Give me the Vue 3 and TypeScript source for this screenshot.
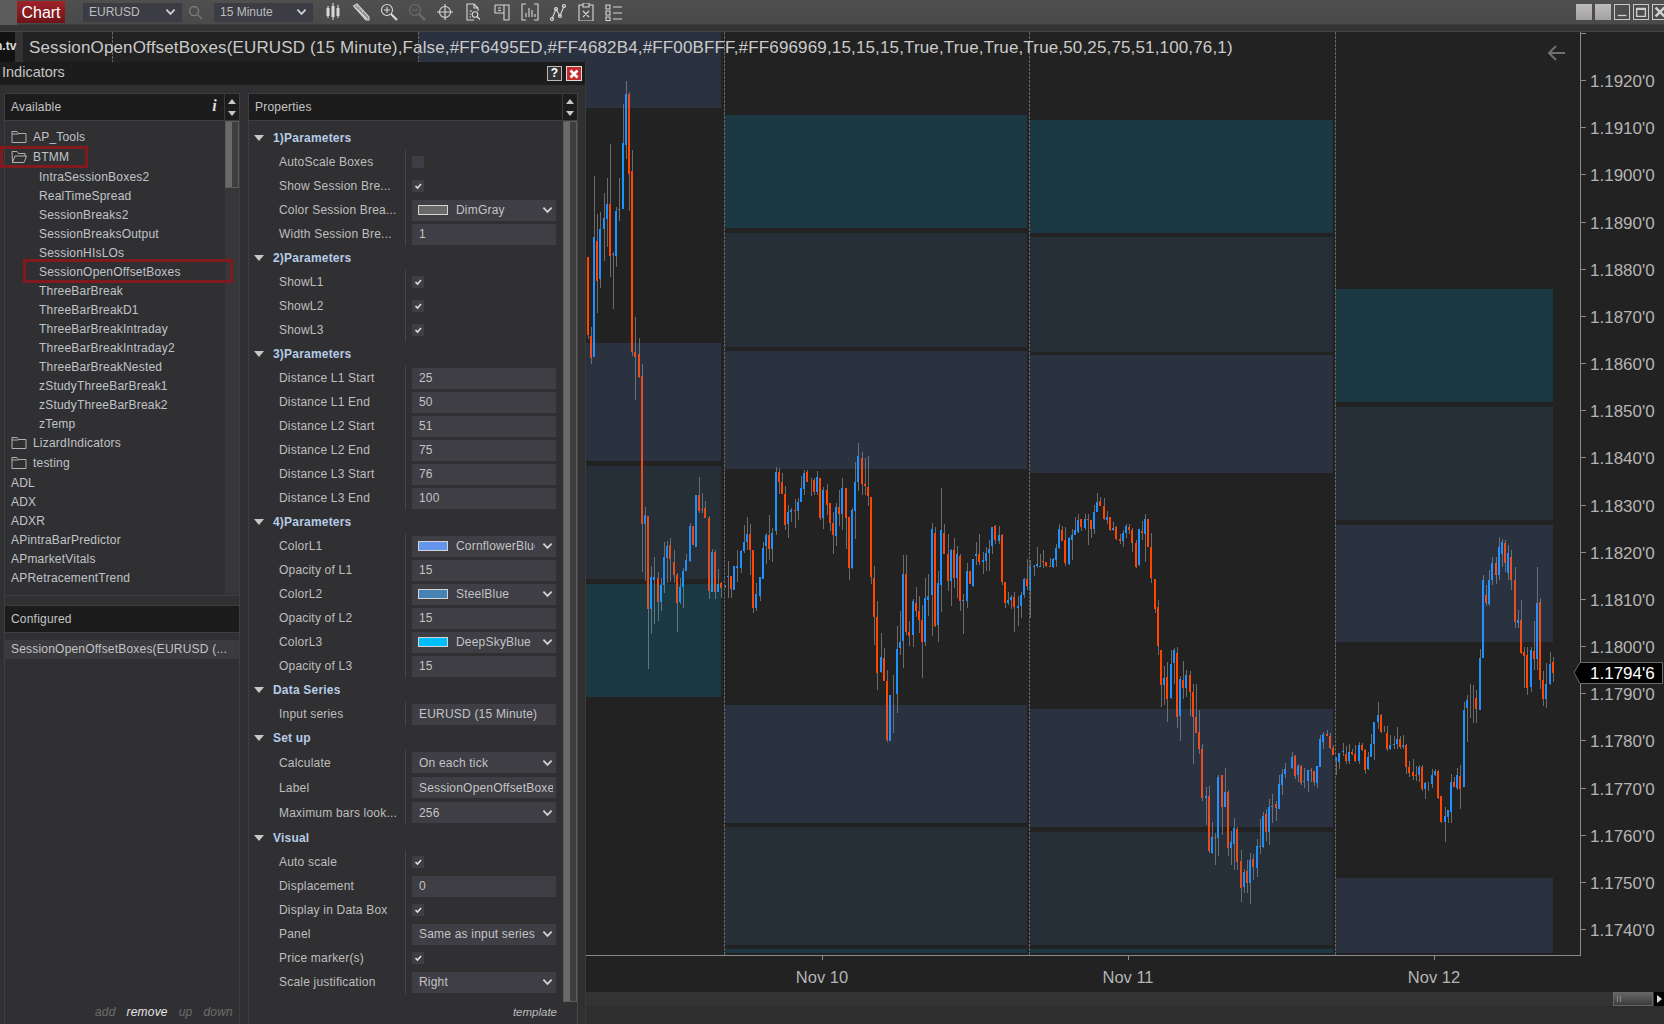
<template>
  <div class="screen">
    <div class="toolbar">
      <div class="corner"></div>
      <div class="tab-chart">Chart</div>
      <div class="drop drop-first">
        <span>EURUSD</span>
        <svg class="chev" viewBox="0 0 12 8"><path d="M1.5 1.5 6 6l4.500-4.500" /></svg>
      </div>
      <svg class="tool-search" viewBox="0 0 16 16">
        <circle cx="6.500" cy="6.500" r="4.800" />
        <path d="m10 10 5 5" />
      </svg>
      <div class="drop drop-second">
        <span>15 Minute</span>
        <svg class="chev" viewBox="0 0 12 8"><path d="M1.5 1.5 6 6l4.500-4.500" /></svg>
      </div>
      <div class="tools">
        <svg viewBox="0 0 18 18" class="tool"><path d="M4 3v12M9 0v17M14 2v13" /><rect x="2.500" y="5" width="3" height="8" class="fill" /><rect x="7.500" y="3" width="3" height="11" class="fill" /><rect x="12.500" y="5" width="3" height="8" class="fill" /></svg>
        <svg viewBox="0 0 18 18" class="tool"><path d="M1.500 3 5 1l12 13v3h-3z" class="fill-soft" /><path d="M3 4.500 15 16M5 3l1 1M7.500 5.500l1 1M10 8l1 1" /></svg>
        <svg viewBox="0 0 18 18" class="tool"><circle cx="7" cy="7" r="5.500" /><path d="M4 7h6M7 4v6" /><path d="m11 11 6 6" class="thick" /></svg>
        <svg viewBox="0 0 18 18" class="tool dim"><circle cx="7" cy="7" r="5.500" /><path d="M4 7h6" /><path d="m11 11 6 6" class="thick" /></svg>
        <svg viewBox="0 0 18 18" class="tool"><circle cx="9" cy="9" r="5.500" /><path d="M9 1v16M1 9h16" /></svg>
        <svg viewBox="0 0 18 18" class="tool"><path d="M10 17H3V1h7l4 4v3M10 1v4h4" /><circle cx="11" cy="11.500" r="2.800" /><path d="m13 13.500 3 3M5.500 8H8M5.500 11H7M5.500 14H7" /></svg>
        <svg viewBox="0 0 18 18" class="tool"><path d="M2 2h14v15M11 2v15h5M2 2v8h9M5 5h3M5 7.500h3" /></svg>
        <svg viewBox="0 0 18 18" class="tool"><path d="M5 1H1v16h4M13 1h4v16h-4M5 14v-4M8 14V5M11 14V7M14 14v-3" /></svg>
        <svg viewBox="0 0 18 18" class="tool"><path d="M3 16 7 6l4 7 4-10" /><circle cx="3" cy="16" r="1.500" /><circle cx="7" cy="6" r="1.500" /><circle cx="11" cy="13" r="1.500" /><circle cx="15" cy="3" r="1.500" /></svg>
        <svg viewBox="0 0 18 18" class="tool"><path d="M6 2H2v16h14V2h-4M6 0h6v4H6zM6 8l6 6M12 8l-6 6" /></svg>
        <svg viewBox="0 0 18 18" class="tool"><path d="M1 2h4v4H1zM1 8h4v4H1zM1 14h4v3.500H1zM8 4h9M8 10h9M8 16h9" /></svg>
      </div>
      <div class="win-buttons">
        <span class="win-solid"></span>
        <span class="win-solid"></span>
        <span class="win-line"><svg viewBox="0 0 16 16"><path d="M3 12h10" /></svg></span>
        <span class="win-line"><svg viewBox="0 0 16 16"><path d="M3 4h10v9H3zM3 5h10" /></svg></span>
        <span class="win-line"><svg viewBox="0 0 16 16"><path d="m3 3 10 10M13 3 3 13" class="thick" /></svg></span>
      </div>
    </div>

    <div class="chart-window">
      <svg class="chart" viewBox="0 32 1664 960" width="1664" height="960">
        <g shape-rendering="crispEdges">
          <rect v-for="(c, i) in wicks" :key="'w' + i" :x="c.x" :y="c.y" width="1" :height="c.h" fill="#6b6b6b" />
          <rect v-for="(c, i) in bodies" :key="'b' + i" :x="c.x" :y="c.y" width="2" :height="c.h" :fill="c.color" />
          <rect
            v-for="(b, i) in boxes"
            :key="'x' + i"
            :x="b.x"
            :y="b.y"
            :width="b.w"
            :height="b.h"
            :fill="b.color"
            fill-opacity="0.15"
          />
          <line v-for="x in breaks" :key="x" :x1="x + 0.5" :x2="x + 0.5" y1="32" y2="955" stroke="#666" stroke-dasharray="3 1" />
          <path d="M1580.500 32V955.500H586" fill="none" stroke="#8a8a8a" />
          <path d="M1580 33.500h6" stroke="#8a8a8a" />
          <line v-for="p in prices" :key="p.label" x1="1580" x2="1586" :y1="p.y + 0.5" :y2="p.y + 0.5" stroke="#8a8a8a" />
          <line v-for="d in days" :key="d.label" :x1="d.x + 0.5" :x2="d.x + 0.5" y1="955" y2="960" stroke="#8a8a8a" />
        </g>
        <text v-for="p in prices" :key="p.label" class="price" x="1590" :y="p.y + 7">{{ p.label }}</text>
        <text v-for="d in days" :key="d.label" class="day" :x="d.x" y="983" text-anchor="middle">{{ d.label }}</text>
        <path d="M1574 672.500 1580 662.500H1662.500V683.500H1580Z" fill="#000" stroke="#6a6a6a" />
        <text class="price last" x="1590" y="679">1.1794'6</text>
        <path d="M1565 53h-16M1556 46l-7 7 7 7" fill="none" stroke="#707070" stroke-width="2" />
      </svg>

      <div class="tab-stub">n.tv</div>
      <div class="chart-title">SessionOpenOffsetBoxes(EURUSD (15 Minute),False,#FF6495ED,#FF4682B4,#FF00BFFF,#FF696969,15,15,15,True,True,True,True,50,25,75,51,100,76,1)</div>
    </div>

    <div class="hscroll">
      <div class="hthumb"><i></i><i></i></div>
      <div class="harrow"><svg viewBox="0 0 5 8"><path d="M0 0 5 4 0 8z" /></svg></div>
    </div>
    <div class="footer"></div>

    <div class="dialog">
      <div class="dialog-head">
        <span>Indicators</span>
        <span class="btn-help">?</span>
        <span class="btn-close"><svg viewBox="0 0 16 16"><path d="m4 4 8 8M12 4l-8 8" /></svg></span>
      </div>
      <div class="dialog-body">
        <div class="col-left">
          <div class="head">
            <span>Available</span>
            <span class="info">i</span>
            <div class="spin">
              <svg viewBox="0 0 8 5"><path d="M4 0 8 5H0z" /></svg>
              <svg viewBox="0 0 8 5"><path d="M0 0h8L4 5z" /></svg>
            </div>
          </div>
          <div class="avail">
            <div class="tree">
              <div v-for="item in tree" :key="item.name" class="tree-row" :class="item.kind">
                <svg v-if="item.kind === 'folder'" class="folder-icon" viewBox="0 0 16 14"><path d="M1 12.500V1.500h5l1.500 2h7.500v9zM1 4h6.500" /></svg>
                <svg v-if="item.kind === 'open'" class="folder-icon" viewBox="0 0 16 14"><path d="M1.500 12.500 1 1.500h5l1.500 2H14V6M1.500 12.500 4 6h11.500L13 12.500z" /></svg>
                <span>{{ item.name }}</span>
                <i v-if="item.mark" class="mark" :class="item.mark"></i>
              </div>
            </div>
            <div class="track"><div class="thumb short"></div></div>
          </div>
          <div class="head configured">Configured</div>
          <div class="conf-list">
            <div class="conf-item">SessionOpenOffsetBoxes(EURUSD (...</div>
            <div class="conf-actions">
              <span>add</span>
              <span class="on">remove</span>
              <span>up</span>
              <span>down</span>
            </div>
          </div>
        </div>

        <div class="col-right">
          <div class="head">
            <span>Properties</span>
            <div class="spin">
              <svg viewBox="0 0 8 5"><path d="M4 0 8 5H0z" /></svg>
              <svg viewBox="0 0 8 5"><path d="M0 0h8L4 5z" /></svg>
            </div>
          </div>
          <div class="props">
            <div class="prop-list">
              <div v-for="g in groups" :key="g.title" class="group" :class="g.cls">
                <div class="group-title">
                  <svg viewBox="0 0 10 6"><path d="M0 0h10L5 6z" /></svg>
                  <span>{{ g.title }}</span>
                </div>
                <div class="group-rows">
                  <div v-for="r in g.rows" :key="r.label" class="prop">
                    <span class="prop-label">{{ r.label }}</span>
                    <span v-if="r.kind === 'check'" class="check">
                      <svg v-if="r.on" viewBox="0 0 12 12"><path d="m3.500 6 2 2 3.500-4" /></svg>
                    </span>
                    <div v-else class="field">
                      <span v-if="r.color" class="swatch" :style="{ background: r.color }"></span>
                      <span class="field-text">{{ r.value }}</span>
                      <svg v-if="r.kind === 'select'" class="chev" viewBox="0 0 12 8"><path d="M1.500 1.500 6 6l4.500-4.500" /></svg>
                    </div>
                  </div>
                </div>
              </div>
            </div>
            <div class="track right"><div class="thumb long"></div></div>
          </div>
          <div class="template">template</div>
        </div>
      </div>
    </div>
  </div>
</template>

<script setup lang="ts">
type Row = { label: string; kind: "check" | "text" | "select"; value?: string; on?: boolean; color?: string };
type Candle = [number, number, number, number, number, number];

const tree = [
  { name: "AP_Tools", kind: "folder" },
  { name: "BTMM", kind: "open", mark: "mark-folder" },
  { name: "IntraSessionBoxes2", kind: "sub" },
  { name: "RealTimeSpread", kind: "sub" },
  { name: "SessionBreaks2", kind: "sub" },
  { name: "SessionBreaksOutput", kind: "sub" },
  { name: "SessionHIsLOs", kind: "sub" },
  { name: "SessionOpenOffsetBoxes", kind: "sub", mark: "mark-item" },
  { name: "ThreeBarBreak", kind: "sub" },
  { name: "ThreeBarBreakD1", kind: "sub" },
  { name: "ThreeBarBreakIntraday", kind: "sub" },
  { name: "ThreeBarBreakIntraday2", kind: "sub" },
  { name: "ThreeBarBreakNested", kind: "sub" },
  { name: "zStudyThreeBarBreak1", kind: "sub" },
  { name: "zStudyThreeBarBreak2", kind: "sub" },
  { name: "zTemp", kind: "sub" },
  { name: "LizardIndicators", kind: "folder" },
  { name: "testing", kind: "folder" },
  { name: "ADL", kind: "root" },
  { name: "ADX", kind: "root" },
  { name: "ADXR", kind: "root" },
  { name: "APintraBarPredictor", kind: "root" },
  { name: "APmarketVitals", kind: "root" },
  { name: "APRetracementTrend", kind: "root" },
];

const check = (label: string, on = true): Row => ({ label, kind: "check", on });
const text = (label: string, value: string): Row => ({ label, kind: "text", value });
const select = (label: string, value: string, color?: string): Row => ({ label, kind: "select", value, color });

const groups: { title: string; cls?: string; rows: Row[] }[] = [
  {
    title: "1)Parameters",
    rows: [
      check("AutoScale Boxes", false),
      check("Show Session Bre..."),
      select("Color Session Brea...", "DimGray", "#696969"),
      text("Width Session Bre...", "1"),
    ],
  },
  { title: "2)Parameters", rows: [check("ShowL1"), check("ShowL2"), check("ShowL3")] },
  {
    title: "3)Parameters",
    rows: [
      text("Distance L1 Start", "25"),
      text("Distance L1 End", "50"),
      text("Distance L2 Start", "51"),
      text("Distance L2 End", "75"),
      text("Distance L3 Start", "76"),
      text("Distance L3 End", "100"),
    ],
  },
  {
    title: "4)Parameters",
    rows: [
      select("ColorL1", "CornflowerBlue", "#6495ed"),
      text("Opacity of L1", "15"),
      select("ColorL2", "SteelBlue", "#4682b4"),
      text("Opacity of L2", "15"),
      select("ColorL3", "DeepSkyBlue", "#00bfff"),
      text("Opacity of L3", "15"),
    ],
  },
  { title: "Data Series", rows: [text("Input series", "EURUSD (15 Minute)")] },
  {
    title: "Set up",
    cls: "loose",
    rows: [
      select("Calculate", "On each tick"),
      text("Label", "SessionOpenOffsetBoxes"),
      select("Maximum bars look...", "256"),
    ],
  },
  {
    title: "Visual",
    cls: "tall",
    rows: [
      check("Auto scale"),
      text("Displacement", "0"),
      check("Display in Data Box"),
      select("Panel", "Same as input series"),
      check("Price marker(s)"),
      select("Scale justification", "Right"),
    ],
  },
];

// chart geometry, read off the picture in page pixels
const L1 = "#6495ed";
const L2 = "#4682b4";
const L3 = "#00bfff";
const box = (x: number, r: number, y: number, b: number, color: string) => ({ x, y, w: r - x, h: b - y, color });
const boxes = [
  box(419, 721, 32, 108, L1),
  box(419, 721, 343, 461, L1),
  box(419, 721, 466, 579, L2),
  box(419, 721, 584, 697, L3),
  box(725, 1027, 115, 228, L3),
  box(725, 1027, 233, 347, L2),
  box(725, 1027, 351, 469, L1),
  box(725, 1027, 705, 823, L1),
  box(725, 1027, 827, 945, L2),
  box(725, 1027, 949, 953, L3),
  box(1030, 1333, 120, 233, L3),
  box(1030, 1333, 237, 352, L2),
  box(1030, 1333, 355, 473, L1),
  box(1030, 1333, 709, 827, L1),
  box(1030, 1333, 832, 945, L2),
  box(1030, 1333, 949, 953, L3),
  box(1336, 1553, 289, 402, L3),
  box(1336, 1553, 407, 520, L2),
  box(1336, 1553, 525, 642, L1),
  box(1336, 1553, 878, 953, L1),
];
const breaks = [112, 418, 724, 1029, 1335];
const days = [
  { label: "Nov 10", x: 822 },
  { label: "Nov 11", x: 1128 },
  { label: "Nov 12", x: 1434 },
];
const prices = Array.from({ length: 19 }, (_, i) => ({
  label: `1.${1920 - i * 10}'0`,
  y: Math.round(80 + i * 47.17),
}));

// [x, blue?, bodyTop, bodyBottom, high, low], in the scale of each measured crop
const partA: Candle[] = [
  [6,0,483,675,483,685],[15,0,675,730,655,745],[24,1,434,728,285,728],[33,0,443,540,378,620],[42,1,414,537,373,558],
  [54,1,388,416,326,492],[63,1,353,390,288,458],[72,0,353,480,207,534],[81,1,475,478,470,610],[90,1,370,480,360,507],
  [99,1,366,368,288,394],[111,1,203,365,108,365],[120,1,83,208,52,243],[129,0,83,279,78,370],[138,0,272,715,220,725],
  [147,0,715,728,630,833],[159,0,720,777,680,777],[168,0,774,1137,745,1254],
];
const partB: Candle[] = [
  [177,1,345,372,321,543],[186,0,348,627,348,807],[195,1,531,627,498,702],[204,1,531,540,471,672],[216,0,534,606,516,663],
  [225,1,555,606,534,633],[234,1,470,555,426,579],[243,1,438,474,423,550],[252,0,435,477,414,545],[264,0,486,526,450,548],
  [273,0,525,610,518,696],[282,1,560,604,533,610],[291,1,513,562,505,624],[300,1,480,514,462,514],[312,1,378,484,368,484],
  [321,0,378,436,378,436],[330,1,285,441,285,441],[339,0,285,332,231,340],[348,0,328,332,279,340],[357,0,324,354,303,354],
  [369,0,354,573,348,597],[378,1,456,575,447,575],[387,0,456,575,450,597],[396,1,552,576,507,576],[405,0,549,564,545,594],
  [417,1,556,561,556,564],[426,1,528,531,483,594],[435,0,528,568,528,594],[444,1,498,570,498,570],[453,1,498,504,450,546],
  [465,1,452,504,450,520],[474,1,426,454,375,460],[483,1,402,426,351,450],[492,0,402,450,372,525],[501,0,450,625,450,638],
  [510,1,582,624,549,632],[522,1,531,588,531,604],[531,1,444,537,426,537],[540,1,405,438,399,492],[549,0,405,447,345,480],
  [558,1,399,447,384,486],[570,1,216,393,201,405],[579,0,216,246,205,282],[588,0,246,281,219,282],[597,0,282,375,258,390],
  [606,1,336,372,315,414],[615,1,330,336,324,366],[627,0,330,333,297,384],[636,1,306,333,294,360],[645,1,264,306,228,306],
  [654,1,219,267,211,285],[663,0,216,246,211,246],[675,1,260,260,235,288],[684,0,240,277,234,285],[693,1,231,276,213,285],
  [702,0,234,354,234,360],[711,1,270,354,262,387],[723,0,270,315,252,345],[732,0,309,369,309,393],[741,0,369,405,336,462],
  [750,1,321,408,309,438],[759,0,321,342,270,378],[768,1,264,342,235,390],[780,0,264,354,264,447],[789,0,351,504,351,540],
  [798,1,330,504,324,507],[807,1,246,333,186,417],[816,1,168,246,129,273],[828,0,174,252,156,285],[837,0,252,258,174,285],
  [846,0,261,288,168,318],[855,0,291,531,291,552],[864,0,534,651,498,735],[873,0,651,819,603,870],[885,1,771,816,699,819],
  [894,0,774,843,744,843],[903,0,843,1020,810,1026],[912,1,885,1023,885,1023],[921,1,900,900,825,1000],[933,1,747,882,678,939],
  [942,1,726,744,633,765],[951,1,522,723,465,804],[960,0,522,696,465,705],[969,0,696,708,663,738],[981,1,603,705,597,741],
  [990,0,609,633,561,651],[999,0,633,660,588,699],[1008,0,660,726,615,834],[1017,1,594,726,534,738],[1026,1,588,600,522,648],
  [1038,1,387,585,369,708],[1047,0,399,678,381,681],[1056,1,549,675,513,726],[1065,1,390,555,264,636],[1074,0,399,462,372,462],
  [1086,0,462,543,402,573],[1095,1,450,543,447,618],[1104,0,450,534,414,564],[1113,1,462,534,438,594],[1122,0,468,603,462,633],
  [1131,1,600,603,582,702],[1143,1,513,603,489,624],[1152,0,513,552,513,552],[1161,1,477,558,477,561],[1170,1,462,468,426,495],
  [1179,0,462,486,402,495],
];
const partC: Candle[] = [
  [9,1,300,306,276,342],[18,1,279,303,261,333],[27,1,267,279,240,333],[36,1,201,258,201,282],[45,0,198,240,195,252],
  [57,1,225,243,198,252],[66,0,225,366,222,375],[75,0,366,429,366,444],[84,1,420,429,396,435],[93,1,411,420,405,447],
  [102,0,411,441,396,516],[114,1,438,444,408,498],[123,1,405,438,396,474],[132,1,357,405,354,414],[141,0,357,378,297,390],
  [150,1,321,393,300,474],[162,1,318,321,315,348],[171,1,312,318,261,324],[180,1,318,319,282,321],[189,0,303,306,270,324],
  [198,0,306,318,306,321],[210,0,318,321,294,321],[219,1,298,321,294,324],[228,1,264,300,252,321],[237,1,207,264,192,267],
  [246,0,210,243,198,243],[255,0,240,309,201,318],[267,1,234,312,231,315],[276,1,225,240,207,300],[285,1,210,225,171,225],
  [294,1,180,216,162,219],[303,0,177,201,177,213],[315,1,177,204,162,210],[324,0,177,180,162,255],[333,0,180,207,180,234],
  [342,1,156,207,135,222],[351,1,126,156,99,156],[360,0,123,138,111,138],[372,0,138,178,114,180],[381,1,171,180,153,192],
  [390,0,171,210,171,213],[399,1,204,210,186,213],[408,0,201,237,198,240],[420,0,237,243,222,252],[429,1,219,243,210,261],
  [438,1,198,219,192,234],[447,0,202,210,192,222],[456,0,210,249,204,276],[468,0,249,321,240,324],[477,1,208,315,207,318],
  [486,0,213,219,183,240],[495,1,177,222,162,306],[504,0,177,261,177,261],[513,0,261,354,219,369],[525,0,357,447,357,459],
  [534,0,441,558,420,585],[543,0,570,675,570,741],[552,1,654,675,618,735],[561,0,651,717,606,786],[573,1,612,714,570,717],
  [582,1,570,609,564,672],[591,0,579,771,561,804],[600,1,657,768,648,843],[609,0,660,684,603,717],[618,1,645,684,630,711],
  [630,0,645,696,633,768],[639,0,696,771,672,912],[648,0,771,819,672,819],[657,0,816,867,750,882],[666,0,867,1014,852,1023],
  [678,1,1008,1014,981,1095],[687,0,1008,1173,978,1179],[696,1,1131,1179,1086,1182],[705,0,1131,1134,1119,1215],[714,1,951,1134,945,1188],
  [726,0,945,1041,945,1125],[735,1,996,1041,924,1041],[744,0,996,1164,990,1188],[753,1,1146,1164,1113,1215],[762,1,1104,1152,1074,1230],
  [771,0,1107,1206,1101,1230],[783,0,1203,1284,1170,1326],[792,1,1236,1281,1227,1299],[801,0,1233,1269,1201,1299],[810,1,1200,1269,1179,1332],
  [819,0,1197,1221,1182,1260],[831,1,1158,1224,1137,1251],[840,1,1158,1161,1077,1182],[849,1,1068,1161,1056,1164],[858,0,1062,1116,1047,1143],
  [867,1,1041,1116,1017,1155],[876,1,1038,1041,1002,1089],[888,0,1032,1044,1023,1083],[897,1,972,1047,945,1047],[906,1,942,975,927,1005],
  [915,1,927,942,909,954],[936,1,891,924,876,927],[945,0,888,948,885,957],[954,1,918,945,912,966],[963,0,918,969,915,975],
  [972,1,963,966,924,984],[984,1,930,963,930,996],[993,0,930,933,924,966],[1002,0,933,966,933,978],[1011,1,918,969,918,984],
  [1020,1,837,921,825,921],[1029,1,822,846,816,867],[1041,0,822,828,810,828],[1050,0,828,864,819,867],[1059,0,864,885,855,885],
  [1068,1,894,900,891,945],[1077,1,879,906,879,927],[1089,1,873,876,849,888],[1098,0,882,903,858,912],[1107,1,876,903,852,912],
  [1116,0,876,882,867,885],[1125,0,882,903,855,906],[1137,1,855,903,846,912],[1146,0,855,870,849,873],[1155,0,870,930,867,942],
  [1164,1,891,927,876,930],[1173,1,852,891,822,891],[1182,1,786,852,786,900],[1194,1,765,786,726,807],
];
const partD: Candle[] = [
  [243,0,345,396,342,399],[252,1,385,385,378,396],[261,0,399,447,378,453],[270,1,435,447,405,450],[282,1,432,435,408,447],
  [291,1,417,432,381,447],[300,0,417,441,408,447],[309,1,435,441,405,447],[318,0,435,501,432,522],[327,0,501,519,483,531],
  [339,0,516,528,477,540],[348,0,525,528,498,543],[357,1,501,525,495,546],[366,0,501,567,495,573],[375,1,549,567,546,597],
  [384,1,560,560,546,573],[396,1,525,552,507,564],[405,1,513,525,507,528],[414,0,513,594,510,597],[423,0,588,666,588,669],
  [435,1,648,666,621,726],[444,1,630,651,630,669],[453,1,546,636,522,669],[462,0,546,561,531,561],[471,1,525,564,504,570],
  [480,0,528,567,495,627],[492,1,330,561,306,561],[501,1,300,324,285,426],[510,1,300,300,252,354],[519,1,300,300,255,369],
  [528,0,294,327,270,369],[540,1,174,330,147,330],[549,1,-60,174,-75,174],[558,0,-15,8,-45,18],[567,1,-60,12,-90,18],
  [576,1,-110,-60,-130,-45],[588,0,-110,-75,-130,-50],[597,1,-160,-75,-190,-60],[606,1,-175,-140,-183,-100],[615,0,-170,-110,-180,-85],
  [624,1,-140,-80,-165,-60],[633,0,-130,-60,-150,-30],[645,0,-60,66,-100,84],[654,1,60,68,30,84],[663,0,60,158,0,162],
  [672,0,156,168,140,264],[681,0,165,264,140,285],[693,1,150,261,141,276],[702,0,153,177,63,210],[711,1,8,177,-100,210],
  [720,0,5,240,-5,267],[729,0,240,297,213,318],[738,1,252,297,189,324],[750,1,192,252,156,255],[759,0,186,219,171,246],
];

const all = [
  { rows: partA, x0: 586, y0: 60, sy: 2.45 },
  { rows: partB, x0: 586, y0: 400, sy: 3 },
  { rows: partC, x0: 980, y0: 460, sy: 3 },
  { rows: partD, x0: 1300, y0: 600, sy: 3 },
].flatMap((s) =>
  s.rows.map(([x, blue, top, bottom, high, low]) => ({
    x: s.x0 + x / 3,
    blue,
    top: s.y0 + top / s.sy,
    bottom: s.y0 + bottom / s.sy,
    high: s.y0 + high / s.sy,
    low: s.y0 + low / s.sy,
  })),
);

const wicks = all.map((c) => ({ x: Math.round(c.x - 0.5), y: Math.round(c.high), h: Math.round(c.low - c.high) }));
const bodies = all
  .filter((c) => c.bottom > c.top)
  .map((c) => ({
    x: Math.round(c.x - 1),
    y: Math.round(c.top),
    h: Math.max(1, Math.round(c.bottom - c.top)),
    color: c.blue ? "#1e90ff" : "#ff4500",
  }));
</script>

<style>
html,
body {
  margin: 0;
  background: #2e2e2e;
}
</style>

<style scoped>
.screen {
  position: relative;
  width: 1664px;
  height: 1024px;
  display: flex;
  flex-direction: column;
  overflow: hidden;
  font-family: "Liberation Sans", Arial, sans-serif;
  color: #c4c4c4;
  background: #2e2e2e;
}

.toolbar {
  height: 32px;
  box-sizing: border-box;
  padding-bottom: 7px;
  border-bottom: 1px solid #454545;
  display: flex;
  align-items: center;
  flex-shrink: 0;
  background: linear-gradient(#4f4f4f 0, #4a4a4a 24px, #343434 25px, #343434 32px);
}
.corner {
  width: 17px;
  height: 25px;
  background: #5c5c5c;
}
.tab-chart {
  width: 48px;
  height: 22px;
  line-height: 24px;
  text-align: center;
  color: #fff;
  font-size: 16px;
  background: linear-gradient(#a02329, #6e1418);
}
.drop {
  display: flex;
  align-items: center;
  justify-content: space-between;
  box-sizing: border-box;
  width: 99px;
  height: 19px;
  padding: 0 6px;
  font-size: 12px;
  background: #3c3d44;
  color: #bdbdbd;
}
.drop-first {
  margin-left: 18px;
}
.drop-second {
  margin-left: 11px;
}
.chev {
  width: 11px;
  height: 8px;
  flex-shrink: 0;
  fill: none;
  stroke: #d0d0d0;
  stroke-width: 2;
}
.tool-search {
  width: 15px;
  height: 15px;
  margin-left: 6px;
  fill: none;
  stroke: #808080;
  stroke-width: 1.3;
}
.tools {
  display: flex;
  gap: 10.100px;
  margin-left: 11px;
}
.tool {
  width: 18px;
  height: 18px;
  fill: none;
  stroke: #d8d8d8;
  stroke-width: 1.1;
}
.tool .fill {
  fill: #d8d8d8;
  stroke: none;
}
.tool .fill-soft {
  fill: #8c8c8c;
}
.tool .thick {
  stroke-width: 2.2;
}
.tool.dim {
  stroke: #6e6e6e;
}
.win-buttons {
  display: flex;
  gap: 3px;
  margin-left: auto;
  margin-right: -4px;
}
.win-solid,
.win-line {
  width: 16px;
  height: 16px;
  box-sizing: border-box;
}
.win-solid {
  background: linear-gradient(#c0bcbc, #a2a0a0);
}
.win-line {
  border: 1px solid #c8c8c8;
}
.win-line svg {
  display: block;
  fill: none;
  stroke: #d0d0d0;
  stroke-width: 1.5;
  width: 14px;
  height: 14px;
}
.win-line .thick {
  stroke-width: 3;
}

.chart-window {
  flex: 1;
  position: relative;
  background: #222;
  overflow: hidden;
}
.chart {
  display: block;
}
.price {
  font-size: 17px;
  fill: #b4b4b4;
}
.price.last {
  fill: #fff;
}
.day {
  font-size: 16.500px;
  fill: #b4b4b4;
}
.tab-stub {
  position: absolute;
  left: 0;
  top: 0;
  width: 23px;
  height: 30px;
  padding-top: 7px;
  box-sizing: border-box;
  background: linear-gradient(90deg, #121212 15px, #333 15px);
  font-size: 12px;
  color: #ddd;
  font-weight: bold;
  text-indent: -5px;
  overflow: hidden;
  white-space: nowrap;
}
.chart-title {
  position: absolute;
  left: 29px;
  top: 6px;
  font-size: 17px;
  letter-spacing: 0.15px;
  white-space: nowrap;
  color: #cacaca;
}

.dialog {
  position: absolute;
  left: 0;
  top: 62px;
  bottom: 0;
  width: 586px;
  background: #303033;
  box-sizing: border-box;
  border-right: 1px solid #3a3a3a;
  display: flex;
  flex-direction: column;
  font-size: 12px;
  letter-spacing: 0.2px;
}
.dialog-head {
  height: 23px;
  flex-shrink: 0;
  display: flex;
  align-items: center;
  gap: 4px;
  padding: 0 3px 0 2px;
  background: #1c1c1c;
  font-size: 14.500px;
  letter-spacing: 0;
  color: #c4c4c4;
}
.dialog-head > span:first-child {
  margin-right: auto;
  margin-top: -3px;
}
.btn-help {
  width: 15px;
  height: 15px;
  box-sizing: border-box;
  border: 1px solid #b9b9b9;
  background: #333;
  color: #fff;
  font-size: 12px;
  font-weight: bold;
  text-align: center;
  line-height: 13px;
}
.btn-close {
  width: 16px;
  height: 15px;
  border: 1px solid #ddd;
  box-sizing: border-box;
  background: #c42b2b;
}
.btn-close svg {
  display: block;
  fill: none;
  stroke: #fff;
  stroke-width: 3;
}
.dialog-body {
  flex: 1;
  display: flex;
  gap: 8px;
  padding: 8px 0 0 4px;
  min-height: 0;
}
.col-left {
  width: 236px;
  display: flex;
  flex-direction: column;
  border-left: 1px solid #3e3e40;
  border-right: 1px solid #3e3e40;
  box-sizing: border-box;
}
.col-right {
  width: 330px;
  display: flex;
  flex-direction: column;
  box-sizing: border-box;
  border-left: 1px solid #3e3e40;
  border-right: 1px solid #47474a;
}
.head {
  height: 28px;
  flex-shrink: 0;
  box-sizing: border-box;
  display: flex;
  align-items: center;
  padding-left: 6px;
  background: #1c1c1c;
  border: 1px solid #3e3e40;
  border-width: 1px 0;
  color: #c4c4c4;
  position: relative;
}
.info {
  position: absolute;
  right: 22px;
  top: 3px;
  font: italic bold 16px "Liberation Serif", serif;
  color: #ddd;
}
.spin {
  margin-left: auto;
  width: 14px;
  height: 100%;
  display: flex;
  flex-direction: column;
  align-items: center;
  justify-content: center;
  gap: 7px;
  border-left: 1px solid #3a3a3a;
}
.spin svg {
  width: 8px;
  height: 5px;
  fill: #c8c8c8;
}
.avail {
  height: 475px;
  flex-shrink: 0;
  display: flex;
  border-bottom: 1px solid #3e3e40;
  box-sizing: border-box;
}
.tree {
  flex: 1;
  padding-top: 6px;
}
.tree-row {
  position: relative;
  height: 19px;
  box-sizing: border-box;
  display: flex;
  align-items: center;
  white-space: nowrap;
  color: #c0c4c8;
}
.tree-row.folder,
.tree-row.open {
  height: 20px;
  padding-left: 6px;
}
.tree-row.sub {
  padding: 1px 0 0 34px;
}
.tree-row.root {
  padding: 1px 0 0 6px;
}
.folder-icon {
  width: 16px;
  height: 14px;
  flex-shrink: 0;
  margin-right: 6px;
  fill: none;
  stroke: #b0b0b0;
  stroke-width: 1;
}
.mark {
  position: absolute;
  border: 3px solid #801a1e;
  box-sizing: border-box;
}
.mark-folder {
  left: -5px;
  top: -1px;
  width: 88px;
  height: 22px;
}
.mark-item {
  left: 18px;
  top: -3px;
  width: 210px;
  height: 24px;
}
.track {
  width: 14px;
  flex-shrink: 0;
  background: #37373a;
}
.thumb {
  box-sizing: border-box;
  border: 1px solid #5c5c5c;
  background: linear-gradient(90deg, #6a6a6a 50%, #3e3e40 50%);
}
.thumb.short {
  height: 67px;
}
.thumb.long {
  height: 881px;
}
.configured {
  margin-top: 9px;
}
.conf-list {
  flex: 1;
  display: flex;
  flex-direction: column;
}
.conf-item {
  margin-top: 7px;
  height: 19px;
  line-height: 19px;
  padding-left: 6px;
  background: #3b3b3f;
  white-space: nowrap;
}
.conf-actions {
  margin-top: auto;
  margin-bottom: 3px;
  height: 16px;
  display: flex;
  justify-content: flex-end;
  gap: 11px;
  padding-right: 6px;
  font-style: italic;
  color: #6c6c6c;
}
.conf-actions .on {
  color: #e6e6e6;
}
.props {
  flex: 1;
  display: flex;
  min-height: 0;
}
.prop-list {
  flex: 1;
  padding-top: 5px;
}
.group-title {
  height: 24px;
  display: flex;
  align-items: center;
  font-weight: bold;
  color: #b6cbe6;
}
.group-title svg {
  width: 10px;
  height: 6px;
  margin: 0 9px 0 5px;
  fill: #c8c8c8;
}
.group.loose .prop {
  height: 25px;
}
.group.tall .group-title {
  height: 25px;
}
.group-rows {
  margin-left: 156px;
  border-left: 1px solid #46464a;
}
.prop {
  height: 24px;
  display: flex;
  align-items: center;
  position: relative;
}
.prop-label {
  position: absolute;
  left: -127px;
  width: 124px;
  white-space: nowrap;
  color: #bebebe;
}
.check {
  margin-left: 6px;
  width: 12px;
  height: 12px;
  background: #3e3e44;
}
.check svg {
  display: block;
  fill: none;
  stroke: #e0e0e0;
  stroke-width: 1.6;
}
.field {
  margin-left: 6px;
  width: 144px;
  height: 21px;
  box-sizing: border-box;
  padding: 0 3px 0 7px;
  display: flex;
  align-items: center;
  background: #3e3e44;
  color: #c4c4c4;
}
.field-text {
  flex: 1;
  overflow: hidden;
  white-space: nowrap;
}
.swatch {
  width: 30px;
  height: 10px;
  margin: 0 8px 0 -1px;
  flex-shrink: 0;
  box-sizing: border-box;
  border: 1px solid #d4d4d4;
}
.field .chev {
  margin-left: 7px;
}
.template {
  height: 22px;
  line-height: 21px;
  text-align: right;
  padding-right: 20px;
  font-size: 11.500px;
  letter-spacing: 0;
  font-style: italic;
  color: #bbb;
  background: #303033;
}

.hscroll {
  height: 14px;
  flex-shrink: 0;
  margin-left: 586px;
  display: flex;
  justify-content: flex-end;
  background: #333;
}
.hthumb {
  width: 40px;
  box-sizing: border-box;
  border: 1px solid #666;
  background: linear-gradient(#666, #3c3c3c);
  display: flex;
  gap: 2px;
  padding: 3px 0 3px 3px;
}
.hthumb i {
  width: 1px;
  background: #888;
}
.harrow {
  width: 10px;
  margin-left: 1px;
  background: #000;
  display: flex;
  align-items: center;
  justify-content: center;
}
.harrow svg {
  width: 5px;
  height: 8px;
  fill: #ddd;
}
.footer {
  height: 18px;
  flex-shrink: 0;
  background: #2e2e2e;
}
</style>
